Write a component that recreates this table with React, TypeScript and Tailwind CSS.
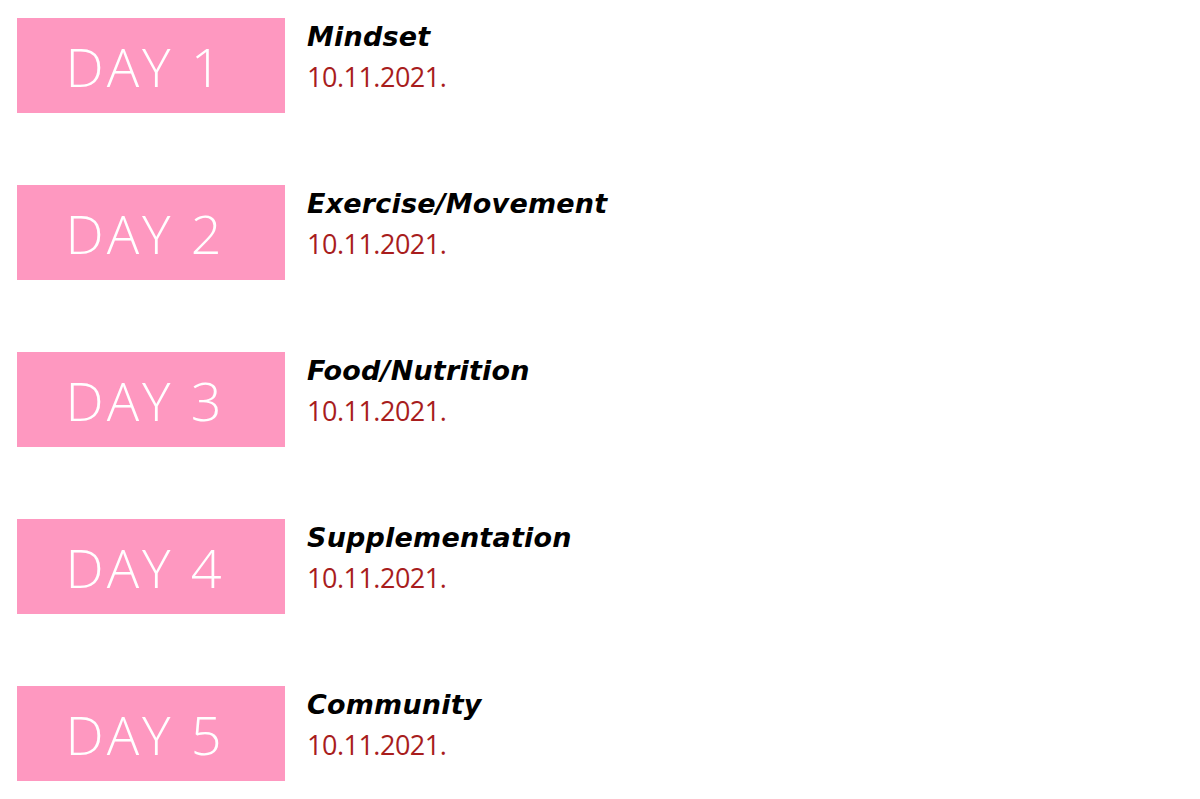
const days = [
  { n: 1, title: 'Mindset' },
  { n: 2, title: 'Exercise/Movement' },
  { n: 3, title: 'Food/Nutrition' },
  { n: 4, title: 'Supplementation' },
  { n: 5, title: 'Community' },
];

export default function App() {
  return (
    <main className="min-h-screen bg-white pl-[17px] pt-[18px] font-['Open_Sans',sans-serif]">
      <div className="flex flex-col gap-[72px]">
        {days.map((d) => (
          <div key={d.n} className="flex items-start">
            <div className="flex h-[95px] w-[268px] items-center justify-center bg-[#fe98c0] pr-[12px]">
              <span className="text-[54px] font-light leading-none tracking-[3px] text-white">DAY {d.n}</span>
            </div>
            <div className="ml-[22px] flex flex-col">
              <span className="font-['DejaVu_Sans',sans-serif] text-[27px] font-bold italic leading-[38px] tracking-[0.2px] text-black">
                {d.title}
              </span>
              <span className="mt-[4px] text-[27px] font-medium leading-[34px] tracking-[-0.5px] text-[#a81d1d]">
                10.11.2021.
              </span>
            </div>
          </div>
        ))}
      </div>
    </main>
  );
}
